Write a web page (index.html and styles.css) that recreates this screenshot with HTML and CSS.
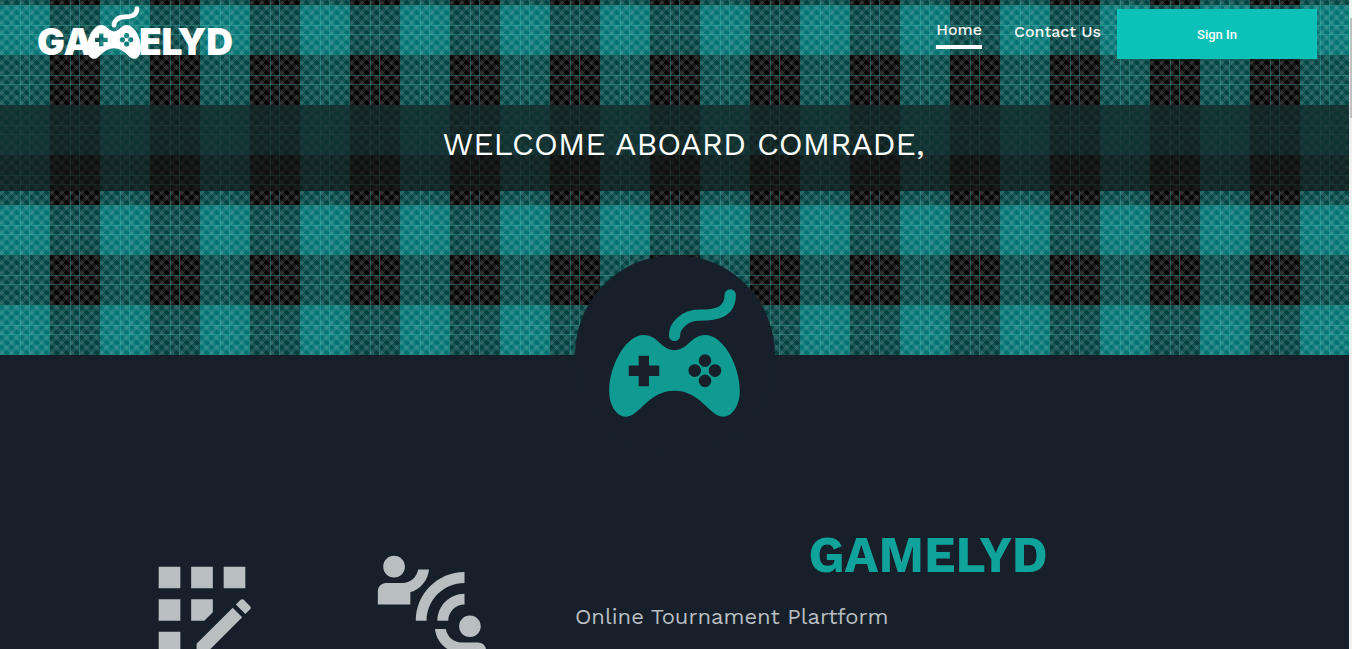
FILE: index.html
```html
<!DOCTYPE html>
<html lang="en">
<head>
<meta charset="utf-8">
<title>Gamelyd</title>
<link rel="stylesheet" href="styles.css">
</head>
<body>
<svg class="defs" aria-hidden="true">
  <symbol id="pad" viewBox="118 114 394 386">
    <path fill-rule="evenodd" d="M118 420C118 350 165 253 223 253C265 253 275 299 315 299C355 299 365 253 407 253C465 253 512 350 512 420C512 465 490 499 461 499C420 499 395 421 315 421C235 421 210 499 169 499C140 499 118 465 118 420ZM207 315V345H177V376H207V407H238V376H269V345H238V315ZM388 330a19 19 0 1 0 38 0a19 19 0 1 0 -38 0ZM357 360a19 19 0 1 0 38 0a19 19 0 1 0 -38 0ZM418 360a19 19 0 1 0 38 0a19 19 0 1 0 -38 0ZM388 391a19 19 0 1 0 38 0a19 19 0 1 0 -38 0Z"/>
    <path class="cord" d="M315 254C315 225 345 193 390 193C440 193 483 185 483 132"/>
  </symbol>
</svg>
<div class="page">
  <div class="hero">
    <header class="topbar">
      <a class="logo" href="#" aria-label="Gamelyd"><span>GA</span><svg class="logo-pad"><use href="#pad"/></svg><span>ELYD</span></a>
      <nav class="nav">
        <a class="link active" href="#">Home</a>
        <a class="link" href="#">Contact Us</a>
        <button class="signin" type="button">Sign In</button>
      </nav>
    </header>
    <h1 class="welcome">WELCOME ABOARD COMRADE,</h1>
    <div class="badge"><svg class="badge-pad"><use href="#pad"/></svg></div>
  </div>
  <main class="about">
    <div class="features">
      <svg class="feature" viewBox="0 0 24 24"><path d="M10 4h4v4h-4zM4 16h4v4H4zM4 10h4v4H4zM4 4h4v4H4zM16 4h4v4h-4zM14 12.42V10h-4v4h2.42zM20.88 11.29l-1.17-1.17c-.16-.16-.42-.16-.58 0l-.88.88L20 12.75l.88-.88c.16-.16.16-.42 0-.58zM11 18.25V20h1.75l6.67-6.67-1.75-1.75z"/></svg>
      <svg class="feature" viewBox="0 0 24 24"><path d="M11 14H9c0-4.97 4.03-9 9-9v2c-3.87 0-7 3.13-7 7zm7-3V9c-2.76 0-5 2.24-5 5h2c0-1.66 1.34-3 3-3zM7 4c0-1.11-.89-2-2-2s-2 .89-2 2 .89 2 2 2 2-.89 2-2zm4.45.5h-2C9.21 5.92 7.99 7 6.5 7h-3C2.67 7 2 7.67 2 8.5V11h6V8.74c1.86-.59 3.25-2.23 3.45-4.24zM19 17c1.11 0 2-.89 2-2s-.89-2-2-2-2 .89-2 2 .89 2 2 2zm1.5 1h-3c-1.49 0-2.71-1.08-2.95-2.5h-2c.2 2.01 1.6 3.65 3.45 4.24V22h6v-2.5c0-.83-.67-1.5-1.5-1.5z"/></svg>
    </div>
    <div class="intro">
      <h2 class="brand">GAMELYD</h2>
      <p class="tagline">Online Tournament Plartform</p>
    </div>
  </main>
</div>
<div class="scroll"><div class="thumb"></div></div>
</body>
</html>
```
FILE: styles.css
```css
* { box-sizing: border-box; }
body {
  margin: 0;
  height: 100vh;
  display: flex;
  overflow: hidden;
  background: #17202a;
  font-family: "Work Sans", Inter, sans-serif;
}
.defs { position: absolute; width: 0; height: 0; }
.cord { fill: none; stroke: currentColor; stroke-width: 34; stroke-linecap: round; }
.page { flex: 1; min-width: 0; overflow: hidden; }
.hero {
  --line: rgba(60, 210, 200, .3);
  --weave: rgba(255, 255, 255, .1);
  height: 355px;
  background-color: #000;
  background-image:
    linear-gradient(transparent 20px, var(--line) 20px 21px, transparent 21px 29px, var(--line) 29px 30px, transparent 30px),
    linear-gradient(90deg, transparent 20px, var(--line) 20px 21px, transparent 21px 29px, var(--line) 29px 30px, transparent 30px),
    linear-gradient(45deg, var(--weave) 25%, transparent 25% 50%, var(--weave) 50% 75%, transparent 75%),
    linear-gradient(-45deg, var(--weave) 25%, transparent 25% 50%, var(--weave) 50% 75%, transparent 75%),
    linear-gradient(rgba(0, 255, 250, .25) 50px, transparent 50px),
    linear-gradient(90deg, #004444 50px, transparent 50px);
  background-size: 50px 50px, 50px 50px, 10px 10px, 10px 10px, 100px 100px, 100px 100px;
  background-position: 0 5px, 0 5px, -3px 0, -3px 0, 0 5px, 0 5px;
}
.topbar {
  height: 105px;
  padding: 6px 32px 0 37px;
  display: flex;
  justify-content: space-between;
  align-items: flex-start;
}
.logo {
  display: flex;
  align-items: flex-end;
  color: #fff;
  font: 900 37px/34px Inter, sans-serif;
  text-decoration: none;
}
.logo-pad { width: 56px; height: 53px; margin: 0 -3px 0 -7px; fill: currentColor; }
.nav { display: flex; align-items: flex-start; padding-top: 3px; }
.link {
  margin: 8px 16px;
  padding: 5px 0;
  color: #f5f5f5;
  font-size: 16px;
  font-weight: 500;
  line-height: 20px;
  text-decoration: none;
}
.active { padding: 3px 0 5px; border-bottom: 4px solid #fff; }
.signin {
  width: 200px;
  height: 50px;
  border: 0;
  background: #0cc2b8;
  color: #fff;
  font: 500 13px Roboto, sans-serif;
}
.link + .signin { margin-left: 0; }
.welcome {
  margin: 0;
  padding: 19px 0 27px 18px;
  background: rgba(20, 22, 22, .7);
  color: #fff;
  font-size: 32px;
  font-weight: 400;
  line-height: 40px;
  text-align: center;
}
.badge {
  width: 200px;
  height: 200px;
  margin: 64px auto 0;
  padding-top: 34px;
  border-radius: 50%;
  background: #17202a;
  text-align: center;
}
.badge-pad { width: 131px; height: 128px; color: #0f9b92; fill: currentColor; }
.about { display: grid; grid-template-columns: 575px 1fr; padding-top: 170px; }
.features { display: flex; gap: 100px; padding: 20px 0 0 137px; }
.feature { width: 130px; height: 130px; flex: none; fill: #b9bec1; }
.intro { padding-right: 68px; }
.brand { margin: 0; color: #0fa39b; font-size: 50px; font-weight: 700; line-height: 60px; text-align: center; }
.tagline { margin: 17px 0 0; color: #b9bec1; font-size: 22px; font-weight: 400; line-height: 30px; }
.scroll { width: 3px; padding-top: 18px; background: #f1f1f1; }
.thumb { height: 100px; margin-left: 1px; background: #c1c1c1; }
```
